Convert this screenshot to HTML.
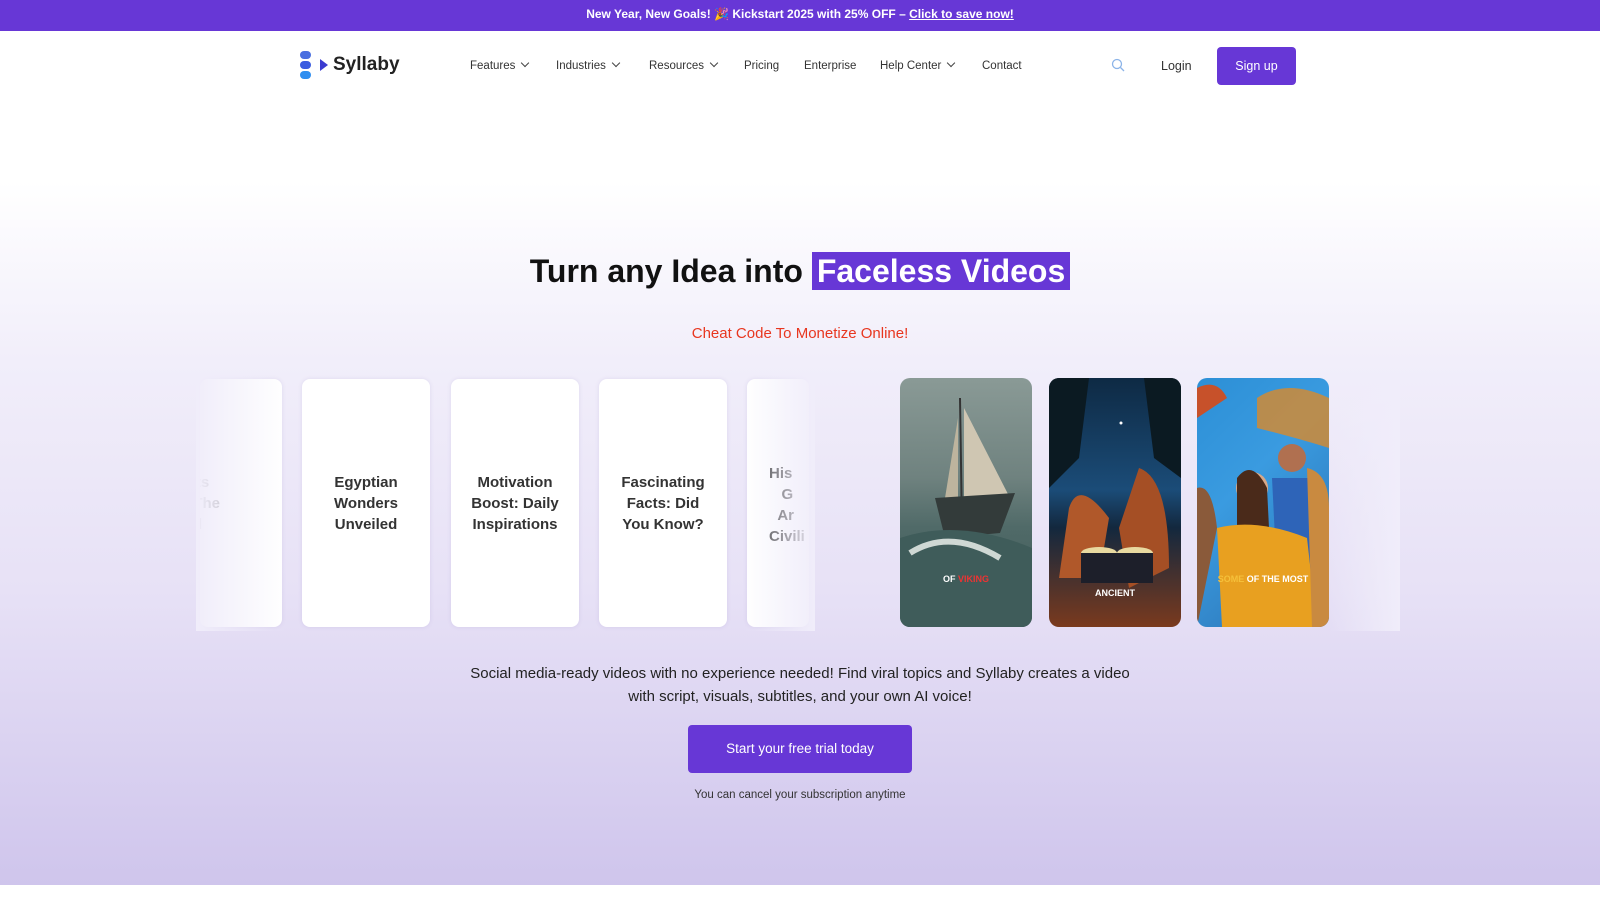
<!DOCTYPE html>
<html><head><meta charset="utf-8"><style>
*{margin:0;padding:0;box-sizing:border-box}
body{width:1600px;height:900px;overflow:hidden;font-family:"Liberation Sans",sans-serif;background:#fff;position:relative}
.banner{position:absolute;left:0;top:0;width:1600px;height:31px;background:#6737d6;color:#fff;font-weight:bold;font-size:12px;text-align:center;line-height:28px}
.banner u{text-decoration:underline}
.hero{position:absolute;left:0;top:31px;width:1600px;height:854px;background:linear-gradient(#fff 0px,#fff 150px,#f1eefa 330px,#e7e1f6 560px,#cfc5ec 854px)}
.nav{position:absolute;top:31px;left:0;width:1600px;height:70px}
.nav span{position:absolute;top:29px;font-size:11.5px;color:#333}
.chev{display:inline-block;width:6px;height:6px;border-right:1.3px solid #444;border-bottom:1.3px solid #444;transform:rotate(45deg);margin-left:7px;position:relative;top:-3px}
.logo{position:absolute;left:300px;top:51px}
.signup{position:absolute;left:1217px;top:47px;width:79px;height:38px;background:#6737d6;color:#fff;border-radius:4px;font-size:12.5px;text-align:center;line-height:38px}
h1{position:absolute;top:253px;left:0;width:1600px;text-align:center;font-size:32px;font-weight:bold;color:#111;letter-spacing:0}
h1 b{background:#6737d6;color:#fff;padding:1px 5px;font-weight:bold}
.sub{position:absolute;top:325px;width:1600px;text-align:center;color:#e8361f;font-size:15px}
.card{position:absolute;top:379px;width:128px;height:248px;background:#fff;border-radius:8px;box-shadow:0 0 4px rgba(120,100,180,.15);display:flex;align-items:center;justify-content:center;text-align:center;font-size:15px;font-weight:bold;color:#333;line-height:21px}
.img{position:absolute;top:378px;width:132px;height:249px;border-radius:10px;overflow:hidden}
.cap{position:absolute;width:100%;text-align:center;color:#fff;font-size:9px;font-weight:bold}
.p{position:absolute;top:662px;width:1600px;text-align:center;font-size:15px;color:#222;line-height:23px}
.btn{position:absolute;left:688px;top:725px;width:224px;height:48px;background:#6737d6;border-radius:4px;color:#fff;font-size:13.5px;text-align:center;line-height:48px}
.small{position:absolute;top:789px;width:1600px;text-align:center;font-size:11.5px;color:#333}
</style></head><body>
<div class="hero"></div>
<div class="banner">New Year, New Goals! 🎉 Kickstart 2025 with 25% OFF – <u>Click to save now!</u></div>
<div class="nav">
<span style="left:470px">Features<i class="chev"></i></span>
<span style="left:556px">Industries<i class="chev"></i></span>
<span style="left:649px">Resources<i class="chev"></i></span>
<span style="left:744px">Pricing</span>
<span style="left:804px">Enterprise</span>
<span style="left:880px">Help Center<i class="chev"></i></span>
<span style="left:982px">Contact</span>
<span style="left:1161px;font-size:12.5px;top:28px">Login</span>
</div>
<svg style="position:absolute;left:1111px;top:58px" width="15" height="15" viewBox="0 0 15 15"><circle cx="6" cy="6" r="4.5" fill="none" stroke="#8cb4e8" stroke-width="1.3"/><path d="M9.5 9.5L13 13" stroke="#8cb4e8" stroke-width="1.3"/></svg>
<div class="logo"><svg width="30" height="28" viewBox="0 0 30 28"><rect x="0" y="0" width="11" height="8" rx="4" fill="#4a6fe0"/><rect x="0" y="10" width="11" height="8" rx="4" fill="#3b5ce0"/><rect x="0" y="20" width="11" height="8" rx="4" fill="#2f8ef0"/><path d="M20 8L28 14L20 20Z" fill="#3b3bd0"/></svg><span style="position:absolute;left:33px;top:3px;font-size:19px;font-weight:bold;color:#222;white-space:nowrap">Syllaby</span></div>
<div class="signup">Sign up</div>
<h1>Turn any Idea into <b>Faceless Videos</b></h1>
<div class="sub">Cheat Code To Monetize Online!</div>
<div class="card" style="left:200px;width:82px;justify-content:flex-start;color:#888;overflow:hidden"><div style="margin-left:-40px;white-space:nowrap;text-align:left">Beasts<br>And The<br>World</div></div>
<div class="card" style="left:302px">Egyptian<br>Wonders<br>Unveiled</div>
<div class="card" style="left:451px">Motivation<br>Boost: Daily<br>Inspirations</div>
<div class="card" style="left:599px">Fascinating<br>Facts: Did<br>You Know?</div>
<div class="card" style="left:747px;width:62px;justify-content:flex-start;overflow:hidden;align-items:flex-start;padding-top:84px;color:#333"><div style="white-space:nowrap;margin-left:22px;text-align:left">His<br>&nbsp;&nbsp;&nbsp;G<br>&nbsp;&nbsp;Ar<br>Civili</div></div>
<div style="position:absolute;left:196px;top:375px;width:90px;height:256px;background:linear-gradient(90deg,rgba(240,237,250,1),rgba(240,237,250,0))"></div>
<div style="position:absolute;left:745px;top:375px;width:70px;height:256px;background:linear-gradient(90deg,rgba(240,237,250,0),rgba(240,237,250,1))"></div>
<div class="img" style="left:900px;background:linear-gradient(#8a9a96 0%,#6f827f 40%,#506a68 60%,#3d5856 100%)">
<svg width="132" height="249" style="position:absolute"><path d="M60 20L62 150" stroke="#333" stroke-width="2"/><path d="M64 30L110 120L64 120Z" fill="#cfc6b2"/><path d="M58 40L45 120L58 120Z" fill="#bdb49e"/><path d="M35 120L115 115L100 155L45 160Z" fill="#333b3a"/><path d="M0 160Q60 140 132 170L132 249L0 249Z" fill="#3f5c5a"/><path d="M10 175Q50 150 100 180" stroke="#cfd8d4" stroke-width="6" fill="none"/></svg>
<div class="cap" style="top:196px">OF <span style="color:#e33">VIKING</span></div></div>
<div class="img" style="left:1049px;background:linear-gradient(#0e2a44 0%,#1b4c78 45%,#13283e 60%,#7a3a1e 100%)">
<svg width="132" height="249" style="position:absolute"><circle cx="72" cy="45" r="1.5" fill="#fff"/><path d="M0 0L40 0L30 80L0 110Z" fill="#0b1a22"/><path d="M132 0L95 0L105 80L132 100Z" fill="#0b1a22"/><path d="M20 130Q30 100 60 140L50 200L10 200Z" fill="#b0582a"/><path d="M90 90Q120 100 120 190L80 210L70 150Z" fill="#a54f25"/><ellipse cx="50" cy="175" rx="18" ry="6" fill="#e8d9a0"/><ellipse cx="86" cy="175" rx="18" ry="6" fill="#e8d9a0"/><rect x="32" y="175" width="36" height="30" fill="#1d1f2a"/><rect x="68" y="175" width="36" height="30" fill="#1d1f2a"/></svg>
<div class="cap" style="top:210px">ANCIENT</div></div>
<div class="img" style="left:1197px;background:linear-gradient(135deg,#2c8fd6 0%,#3a9be0 40%,#2a6fb0 100%)">
<svg width="132" height="249" style="position:absolute"><path d="M60 20Q90 0 132 20L132 70Q100 60 60 50Z" fill="#d98a2a" opacity=".8"/><path d="M0 10Q20 0 30 20L0 40Z" fill="#c7512a"/><circle cx="95" cy="80" r="14" fill="#b07050"/><path d="M75 100L120 100L132 200L80 200Z" fill="#2e64b8"/><circle cx="55" cy="110" r="16" fill="#d8a888"/><path d="M40 100Q55 80 70 110L72 150L40 150Z" fill="#4a2a1a"/><path d="M20 150Q60 140 110 160L120 249L25 249Z" fill="#e8a020"/><path d="M110 90Q132 95 132 130L132 249L115 249Z" fill="#c98a40"/><path d="M0 110Q15 105 20 150L0 249Z" fill="#8a5a3a"/></svg>
<div class="cap" style="top:196px"><span style="color:#f5c03a">SOME</span> OF THE MOST</div></div>
<div style="position:absolute;left:1330px;top:375px;width:70px;height:256px;background:linear-gradient(90deg,rgba(240,237,250,0),rgba(240,237,250,1))"></div>
<div class="p">Social media-ready videos with no experience needed! Find viral topics and Syllaby creates a video<br>with script, visuals, subtitles, and your own AI voice!</div>
<div class="btn">Start your free trial today</div>
<div class="small">You can cancel your subscription anytime</div>
</body></html>
